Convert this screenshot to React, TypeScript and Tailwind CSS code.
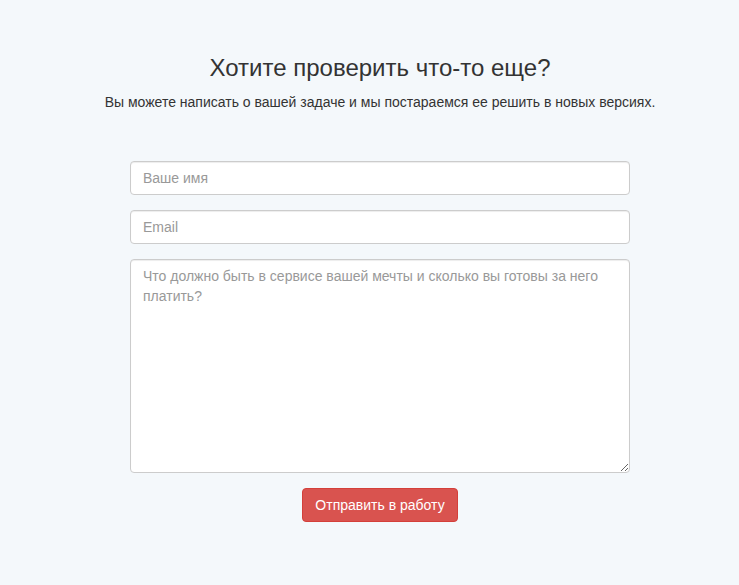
import React from "react";

const App = () => {
  return (
    <div className="min-h-screen pl-[21px] bg-[#f4f8fb] text-[#333] font-['Liberation_Sans',Arial,sans-serif]">
      <div className="pt-[55px] text-center">
        <h2 className="text-[24px] leading-[26px] mb-[11px]">Хотите проверить что-то еще?</h2>
        <p className="text-[14px] leading-[20px]">
          Вы можете написать о вашей задаче и мы постараемся ее решить в новых версиях.
        </p>
      </div>

      {/* ФОРМА */}
      <form className="w-[500px] mx-auto mt-[49px] flex flex-col gap-[15px]" onSubmit={(e) => e.preventDefault()}>
        <input
          type="text"
          placeholder="Ваше имя"
          className="h-[34px] px-[12px] py-[6px] bg-white border border-[#ccc] rounded-[4px] text-[14px] text-[#555] placeholder:text-[#999] shadow-[inset_0_1px_1px_rgba(0,0,0,0.075)] outline-none"
        />
        <input
          type="email"
          placeholder="Email"
          className="h-[34px] px-[12px] py-[6px] bg-white border border-[#ccc] rounded-[4px] text-[14px] text-[#555] placeholder:text-[#999] shadow-[inset_0_1px_1px_rgba(0,0,0,0.075)] outline-none"
        />
        <textarea
          placeholder="Что должно быть в сервисе вашей мечты и сколько вы готовы за него платить?"
          className="h-[214px] px-[12px] py-[6px] bg-white border border-[#ccc] rounded-[4px] text-[14px] leading-[20px] text-[#555] placeholder:text-[#999] shadow-[inset_0_1px_1px_rgba(0,0,0,0.075)] outline-none"
        />
        <div className="flex justify-center">
          <button
            type="submit"
            className="h-[34px] px-[12px] bg-[#d9534f] border border-[#d43f3a] rounded-[4px] text-white text-[14px]"
          >
            Отправить в работу
          </button>
        </div>
      </form>
    </div>
  );
};

export default App;
